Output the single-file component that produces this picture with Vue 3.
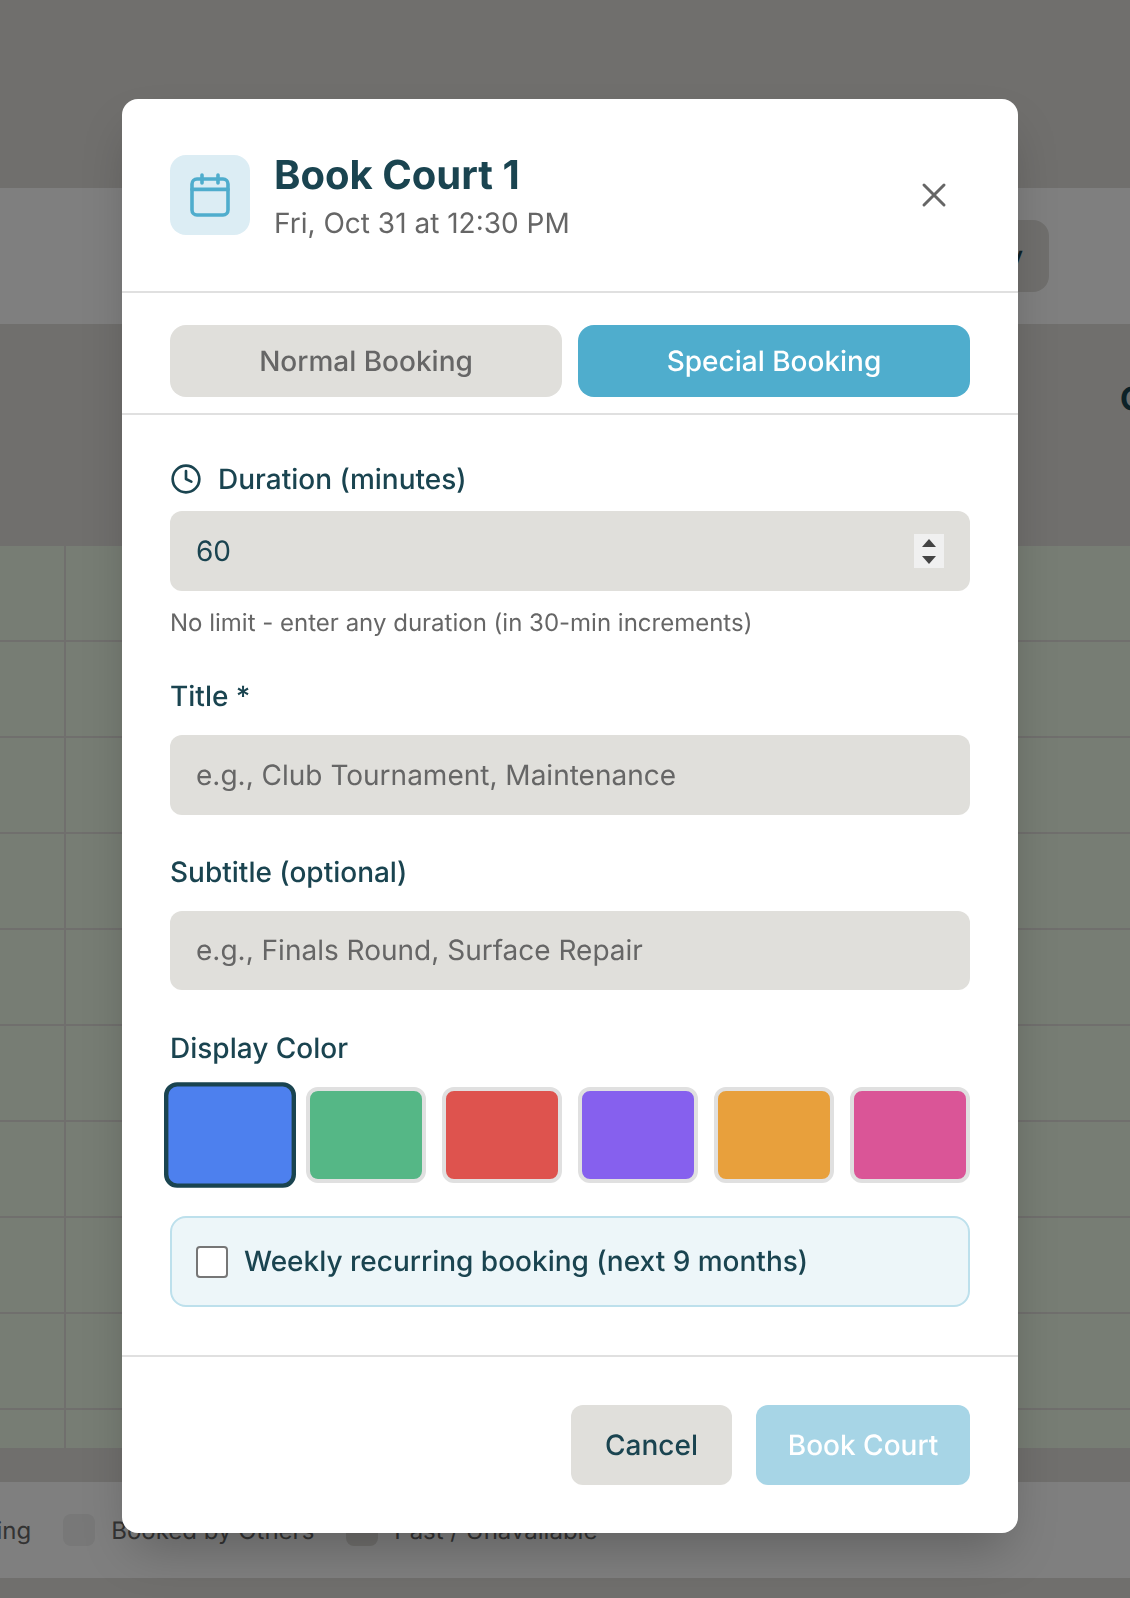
<template>
  <div class="page">
    <div class="top-gap"></div>
    <div class="toolbar">
      <button class="today">Today</button>
    </div>
    <div class="court-head">
      <span class="court-name">Court 2</span>
    </div>
    <div class="grid">
      <div v-for="r in rows" :key="r" class="row">
        <div class="time"></div>
        <div class="cell"></div>
      </div>
    </div>
    <div class="legend">
      <div class="legend-row">
        <div class="legend-item"><span class="swatch mine"></span>Your Booking</div>
        <div class="legend-item"><span class="swatch others"></span>Booked by Others</div>
        <div class="legend-item"><span class="swatch past"></span>Past / Unavailable</div>
      </div>
    </div>

    <div class="overlay">
      <div class="modal">
        <header class="modal-head">
          <div class="head-icon">
            <svg width="48" height="48" viewBox="0 0 24 24" fill="none" stroke="#4fadcd" stroke-width="1.8" stroke-linecap="round" stroke-linejoin="round">
              <rect x="3" y="4" width="18" height="18" rx="2.5" />
              <path d="M8 2v4M16 2v4M3 9.2h18" />
            </svg>
          </div>
          <div class="head-text">
            <h2>Book Court 1</h2>
            <p>Fri, Oct 31 at 12:30 PM</p>
          </div>
          <button class="close" aria-label="Close">
            <svg width="40" height="40" viewBox="0 0 24 24" fill="none" stroke="#666" stroke-width="1.8" stroke-linecap="round" stroke-linejoin="round">
              <path d="M18 6 6 18M6 6l12 12" />
            </svg>
          </button>
        </header>

        <div class="tabs">
          <button class="tab">Normal Booking</button>
          <button class="tab active">Special Booking</button>
        </div>

        <div class="body">
          <label class="label with-icon">
            <svg width="32" height="32" viewBox="0 0 24 24" fill="none" stroke="#1a4450" stroke-width="2" stroke-linecap="round" stroke-linejoin="round">
              <circle cx="12" cy="12" r="10" />
              <path d="M12 6v6l4 2" />
            </svg>
            Duration (minutes)
          </label>
          <div class="number-wrap">
            <input class="field number" type="text" value="60" />
            <div class="spin">
              <i class="up"></i>
              <i class="down"></i>
            </div>
          </div>
          <p class="hint">No limit - enter any duration (in 30-min increments)</p>

          <label class="label title-label">Title *</label>
          <input class="field" type="text" placeholder="e.g., Club Tournament, Maintenance" />

          <label class="label sub-label">Subtitle (optional)</label>
          <input class="field" type="text" placeholder="e.g., Finals Round, Surface Repair" />

          <label class="label color-label">Display Color</label>
          <div class="colors">
            <button
              v-for="(c, i) in colors"
              :key="c"
              class="color"
              :class="{ selected: i === 0 }"
              :style="{ background: c }"
            ></button>
          </div>

          <label class="recurring">
            <input type="checkbox" />
            <span>Weekly recurring booking (next 9 months)</span>
          </label>
        </div>

        <footer class="foot">
          <button class="btn cancel">Cancel</button>
          <button class="btn submit">Book Court</button>
        </footer>
      </div>
    </div>
  </div>
</template>

<script setup>
const rows = 10
const colors = ['#4d80ee', '#55b786', '#de534e', '#8660ee', '#e8a03c', '#da5597']
</script>

<style>
body {
  margin: 0;
}
</style>

<style scoped>
.page {
  position: relative;
  width: 1130px;
  height: 1598px;
  overflow: hidden;
  background: #e0dfdb;
  font-family: Inter, 'Liberation Sans', sans-serif;
  color: #1a4450;
  text-rendering: geometricPrecision;
}
button,
input {
  text-rendering: geometricPrecision;
}
.top-gap {
  height: 188px;
}
.toolbar {
  height: 136px;
  background: #fff;
  display: flex;
  justify-content: flex-end;
  align-items: center;
  padding-right: 81px;
  box-sizing: border-box;
}
.today {
  height: 72px;
  padding: 0 26px;
  border: none;
  border-radius: 16px;
  background: #e0dfdb;
  font: 500 28px Inter, sans-serif;
  color: #1a4450;
}
.court-head {
  height: 222px;
  display: flex;
  align-items: flex-start;
  padding-top: 55px;
  padding-left: 1120px;
  box-sizing: border-box;
  white-space: nowrap;
}
.court-name {
  font-size: 32px;
  font-weight: 700;
}
.grid {
  display: flex;
  flex-direction: column;
}
.row {
  display: flex;
  height: 94px;
  margin-bottom: 2px;
}
.row:last-child {
  height: 38px;
  margin-bottom: 0;
}
.time {
  width: 64px;
  background: #eefae8;
  margin-right: 2px;
}
.cell {
  flex: 1;
  background: #eefae8;
}
.legend {
  margin-top: 34px;
  height: 96px;
  padding-top: 16px;
  box-sizing: border-box;
  background: #fff;
  overflow: hidden;
}
.legend-row {
  display: flex;
  align-items: center;
  gap: 32px;
  height: 64px;
  margin-left: -168px;
  white-space: nowrap;
  font-size: 24px;
  color: #666;
}
.legend-item {
  display: flex;
  align-items: center;
  gap: 16px;
}
.swatch {
  width: 32px;
  height: 32px;
  border-radius: 8px;
  flex: none;
}
.swatch.mine {
  background: #4fadcd;
}
.swatch.others {
  background: #f0f0f0;
}
.swatch.past {
  background: #e0dfdb;
}
.overlay {
  position: absolute;
  inset: 0;
  background: rgba(0, 0, 0, 0.5);
  display: flex;
  justify-content: center;
  align-items: flex-start;
  padding-top: 99px;
  padding-left: 10px;
}
.modal {
  width: 896px;
  height: 1434px;
  background: #fff;
  border-radius: 16px;
  box-shadow: 0 25px 50px -12px rgba(0, 0, 0, 0.25);
  box-sizing: border-box;
  will-change: transform;
}
.modal-head {
  display: flex;
  align-items: center;
  gap: 24px;
  padding: 56px 48px;
  height: 194px;
  box-sizing: border-box;
  border-bottom: 2px solid #e0e0e0;
}
.head-icon {
  width: 80px;
  height: 80px;
  border-radius: 16px;
  background: #dcedf4;
  display: flex;
  align-items: center;
  justify-content: center;
  flex: none;
}
.head-text {
  flex: 1;
  margin-top: 2px;
}
.head-text h2 {
  margin: 0;
  font-size: 40px;
  line-height: 48px;
  font-weight: 700;
}
.head-text p {
  margin: 6px 0 0;
  font-size: 28px;
  line-height: 36px;
  color: #666;
}
.close {
  border: none;
  background: none;
  padding: 0;
  width: 40px;
  height: 40px;
  margin-right: 16px;
}
.tabs {
  display: flex;
  gap: 16px;
  padding: 32px 48px 16px;
  border-bottom: 2px solid #e0e0e0;
}
.tab {
  flex: 1;
  height: 72px;
  border: none;
  border-radius: 16px;
  background: #e0dfdb;
  color: #666;
  font: 500 28px Inter, sans-serif;
}
.tab.active {
  background: #4fadcd;
  color: #fff;
}
.body {
  padding: 48px;
  height: 942px;
  box-sizing: border-box;
  border-bottom: 2px solid #e0e0e0;
  display: flex;
  flex-direction: column;
}
.label {
  font-size: 28px;
  line-height: 32px;
  font-weight: 500;
  display: block;
  margin-bottom: 16px;
}
.with-icon {
  display: flex;
  align-items: center;
  gap: 16px;
}
.title-label {
  margin-top: 41px;
  margin-bottom: 23px;
}
.sub-label {
  margin-top: 41px;
  margin-bottom: 23px;
}
.color-label {
  margin-top: 42px;
  margin-bottom: 23px;
}
.number-wrap {
  position: relative;
}
.field {
  display: block;
  width: 100%;
  height: 80px;
  box-sizing: border-box;
  padding: 0 26px;
  border: none;
  border-radius: 12px;
  background: #e0dfdb;
  font: 400 28px Inter, sans-serif;
  color: #1a4450;
  outline: none;
}
.field::placeholder {
  color: #666;
  opacity: 1;
}
.spin {
  position: absolute;
  right: 26px;
  top: 23px;
  width: 30px;
  height: 34px;
  padding-top: 1px;
  box-sizing: border-box;
  background: #f0f0f0;
  display: flex;
  flex-direction: column;
  align-items: center;
  justify-content: center;
  gap: 9px;
}
.spin i {
  width: 0;
  height: 0;
  border-left: 7px solid transparent;
  border-right: 7px solid transparent;
}
.spin .up {
  border-bottom: 8px solid #444;
}
.spin .down {
  border-top: 8px solid #444;
}
.hint {
  margin: 16px 0 0;
  font-size: 24px;
  line-height: 32px;
  color: #666;
}
.colors {
  display: grid;
  grid-template-columns: repeat(6, 1fr);
  gap: 16px;
}
.color {
  height: 96px;
  padding: 0;
  border: 4px solid #e0e0e0;
  border-radius: 12px;
}
.color.selected {
  border-color: #1a4450;
  transform: scale(1.1);
}
.recurring {
  display: flex;
  align-items: center;
  gap: 16px;
  margin-top: 33px;
  padding: 24px;
  border: 2px solid #bde0ec;
  border-radius: 16px;
  background: #edf6f9;
  font-size: 28px;
  font-weight: 500;
  line-height: 39px;
}
.recurring input {
  appearance: none;
  width: 32px;
  height: 32px;
  margin: 0;
  box-sizing: border-box;
  border: 2px solid #767676;
  border-radius: 4px;
  background: #fff;
}
.foot {
  display: flex;
  justify-content: flex-end;
  gap: 24px;
  padding: 48px;
}
.btn {
  height: 80px;
  border: none;
  border-radius: 12px;
  font: 500 28px Inter, sans-serif;
}
.cancel {
  width: 161px;
  background: #e0dfdb;
  color: #1a4450;
}
.submit {
  width: 214px;
  background: #a7d5e6;
  color: #fff;
}
</style>
